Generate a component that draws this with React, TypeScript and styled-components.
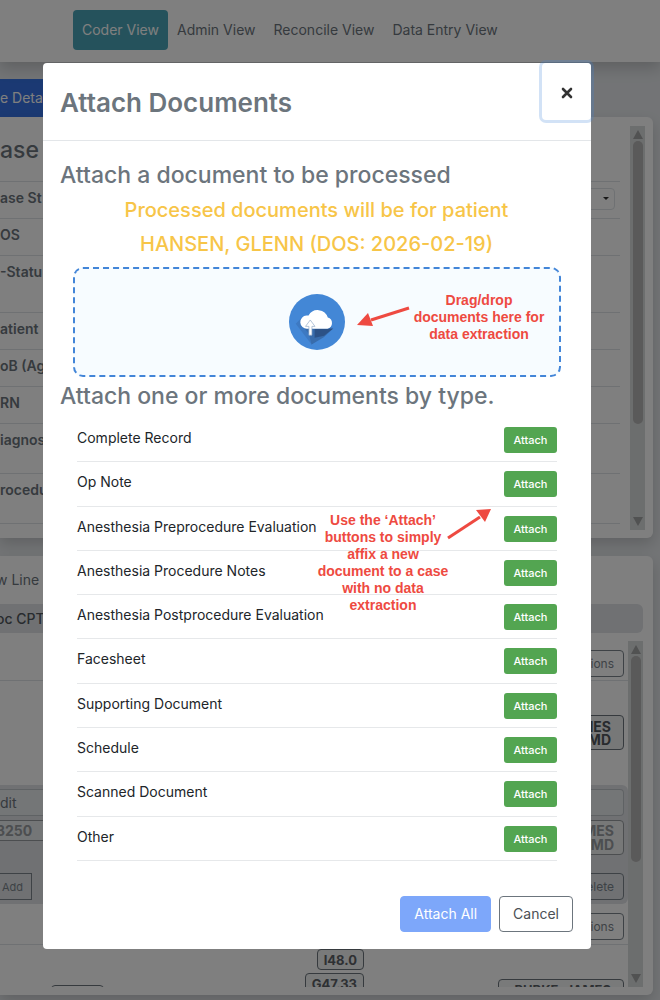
import React from 'react';
import styled, { createGlobalStyle, css } from 'styled-components';

const GlobalStyle = createGlobalStyle`
  *, *::before, *::after { box-sizing: border-box; }
  body {
    margin: 0;
    background: #e6e9ec;
    font-family: Inter, "Liberation Sans", sans-serif;
    font-size: 14px;
    line-height: 20px;
    color: #212529;
  }
  button, select, input { font: inherit; }
  h1, h2, h3, p, ul, dl, dd { margin: 0; padding: 0; }
`;

const Page = styled.div`
  position: relative;
  height: 100vh;
  overflow: hidden;
`;

/* ---------- page behind the dialog ---------- */

const NavBar = styled.nav`
  position: relative;
  display: flex;
  align-items: center;
  height: 62px;
  padding: 0 73px 2px;
  background: #fff;
  box-shadow: 0 6px 14px rgba(0, 0, 0, 0.18);
`;

const NavLink = styled.a<{ $active?: boolean }>`
  padding: 10px 9px;
  border-radius: 4px;
  white-space: nowrap;
  color: #6c757d;
  text-decoration: none;
  ${(p) =>
    p.$active &&
    css`
      background: #4aa5b8;
      color: #fff;
    `}
`;

const Main = styled.main`
  padding: 17px 7px 0 0;
`;

const TabButton = styled.button`
  display: block;
  width: 160px;
  height: 38px;
  padding: 0;
  border: 0;
  background: #3673e6;
  color: #fff;
  text-align: left;
`;

const Card = styled.section`
  border-radius: 0 6px 6px 0;
  background: #fff;
  box-shadow: 0 6px 14px rgba(0, 0, 0, 0.16);
`;

const DetailCard = styled(Card)`
  display: flex;
  gap: 10px;
  height: 421px;
  margin-bottom: 18px;
  padding: 9px 8px 8px 0;
`;

const DetailBody = styled.div`
  flex: 1;
`;

const DetailTitle = styled.h2`
  height: 55px;
  padding-top: 9px;
  font-size: 23px;
  line-height: 30px;
  font-weight: 500;
  color: #6c757d;
`;

const DetailRow = styled.div<{ $size?: 'tall' | 'medium' }>`
  display: flex;
  justify-content: space-between;
  height: ${(p) => (p.$size === 'tall' ? 57 : p.$size === 'medium' ? 50 : 37)}px;
  padding: 6px 5px 0 0;
  border-top: 1px solid #dee2e6;
  font-weight: 600;
  color: #6c757d;
`;

const StatusSelect = styled.select`
  appearance: none;
  width: 120px;
  height: 22px;
  border: 1px solid #dee2e6;
  border-radius: 4px;
  background: #fff;
`;

const SelectWrap = styled.span`
  position: relative;
  &::after {
    content: '';
    position: absolute;
    top: 9px;
    right: 6px;
    border: 3px solid transparent;
    border-top-color: #333;
  }
`;

const ScrollTrack = styled.div`
  display: flex;
  flex: none;
  flex-direction: column;
  align-items: center;
  width: 15px;
  padding: 4px 0;
  background: #d9dcdc;
`;

const ScrollArrow = styled.span<{ $down?: boolean }>`
  width: 0;
  height: 0;
  border: 5px solid transparent;
  ${(p) =>
    p.$down
      ? css`border-top: 9px solid #a2a4a5; border-bottom: 0; margin-top: auto;`
      : css`border-bottom: 9px solid #a2a4a5; border-top: 0;`}
`;

const ScrollThumb = styled.span<{ $length: number }>`
  width: 10px;
  height: ${(p) => p.$length}px;
  margin-top: 2px;
  border-radius: 5px;
  background: #b4b4b4;
`;

const LineCard = styled(Card)`
  height: 439px;
  padding: 0 10px 8px 0;
`;

const LineTitle = styled.h2`
  height: 48px;
  padding-top: 14px;
  font-size: 14px;
  line-height: 20px;
  font-weight: 400;
  text-indent: -4px;
  color: #6c757d;
`;

const ColumnHead = styled.div`
  height: 29px;
  margin-bottom: 8px;
  border-radius: 0 6px 6px 0;
  background: #e0e3e7;
  line-height: 29px;
  font-weight: 500;
  text-indent: -4px;
  color: #50565c;
`;

const LineScroller = styled.div`
  display: flex;
  height: 346px;
  overflow: hidden;
`;

const Lines = styled.div`
  flex: 1;
`;

const LineRow = styled.div<{ $height: number; $rule?: boolean }>`
  display: flex;
  justify-content: flex-end;
  align-items: flex-start;
  height: ${(p) => p.$height}px;
  padding: 9px 4px 0 0;
  border-bottom: ${(p) => (p.$rule ? '1px solid #dee2e6' : '0')};
`;

const SmallButton = styled.button`
  height: 27px;
  padding: 0 9px;
  border: 1px solid #7c858d;
  border-radius: 4px;
  background: transparent;
  font-size: 12px;
  color: #7c858d;
`;

const AddButton = styled(SmallButton)`
  padding: 0 8px 0 2px;
  border-left: 0;
  border-radius: 0;
  font-size: 11px;
`;

const Provider = styled.div<{ $faded?: boolean }>`
  width: 126px;
  height: 35px;
  padding: 4px 12px;
  border: 1px solid #6c757d;
  border-radius: 4px;
  font-size: 14px;
  line-height: 13px;
  font-weight: 700;
  text-align: right;
  color: #50565c;
  background: #eef0f0;
  ${(p) =>
    p.$faded &&
    css`
      padding: 3px 9px;
      line-height: 14px;
      color: #989ca0;
      border-color: #989ca0;
    `}
`;

const EditBlock = styled.div`
  height: 119px;
  padding: 4px 4px 0 0;
  border-radius: 0 6px 6px 0;
  background: #e0e3e7;
`;

const EditField = styled.div`
  height: 27px;
  margin-bottom: 4px;
  border: 1px solid #bfc4c9;
  border-left: 0;
  border-radius: 0 4px 4px 0;
  background: #e9ecef;
  line-height: 26px;
  color: #6c757d;
`;

const Split = styled.div`
  display: flex;
  justify-content: space-between;
  align-items: flex-start;
`;

const CodeField = styled.div`
  width: 90px;
  height: 21px;
  border: 1px solid #989ca0;
  border-left: 0;
  background: #e9ecef;
  line-height: 19px;
  font-weight: 700;
  text-indent: -4px;
  color: #989ca0;
`;

const EditActions = styled(Split)`
  padding-top: 18px;
`;

const CodeRow = styled.div`
  display: grid;
  grid-template-columns: 104px 260px 1fr;
  padding: 4px 4px 0 0;
`;

const CodeChip = styled.span`
  height: 21px;
  padding: 0 6px;
  border: 1px solid #6c757d;
  border-radius: 4px;
  background: #f2f4f4;
  font-size: 13px;
  line-height: 20px;
  font-weight: 700;
  color: #5c6166;
`;

const CodeStack = styled.div`
  display: flex;
  flex-direction: column;
  align-items: flex-end;
  gap: 3px;
`;

const BlankChip = styled.span`
  justify-self: end;
  align-self: start;
  width: 53px;
  height: 20px;
  margin-top: 36px;
  border: 1px solid #6c757d;
  border-radius: 4px;
`;

const PhysicianChip = styled(CodeChip)`
  justify-self: end;
  width: 126px;
  margin-top: 30px;
  padding: 0 12px;
  text-align: right;
  white-space: nowrap;
`;

/* ---------- dialog ---------- */

const Backdrop = styled.div`
  position: absolute;
  inset: 0;
  padding: 63px 69px 0 43px;
  background: rgba(0, 0, 0, 0.5);
`;

const Dialog = styled.div`
  border-radius: 4px;
  background: #fff;
`;

const DialogHeader = styled.header`
  display: flex;
  justify-content: space-between;
  align-items: flex-start;
  height: 78px;
  padding-left: 17px;
  border-bottom: 1px solid #e3e6e9;
`;

const DialogTitle = styled.h1`
  padding-top: 22px;
  font-size: 26px;
  line-height: 36px;
  font-weight: 600;
  color: #6c757d;
`;

const CloseButton = styled.button`
  display: grid;
  place-items: center;
  width: 49px;
  height: 57px;
  padding: 2px 0 0;
  border: 0;
  border-radius: 4px;
  background: #fff;
  box-shadow: 0 0 0 3px rgba(66, 133, 216, 0.24);
  color: #333;
`;

const DialogBody = styled.div`
  padding: 18px 18px 0 17px;
`;

const SectionTitle = styled.h2`
  font-size: 23px;
  line-height: 32px;
  font-weight: 500;
  color: #6c757d;
`;

const PatientNote = styled.p`
  padding: 2px 0 6px;
  font-size: 20px;
  line-height: 34px;
  font-weight: 500;
  text-align: center;
  color: #f7c548;
`;

const DropZone = styled.label`
  position: relative;
  display: flex;
  justify-content: center;
  align-items: center;
  height: 110px;
  margin: 0 12px 3px 13px;
  border: 2px dashed #4285d8;
  border-radius: 10px;
  background: #f7fcff;
`;

const FileInput = styled.input`
  position: absolute;
  width: 1px;
  height: 1px;
  opacity: 0;
`;

const Callout = styled.span<{ $top: number; $right: number }>`
  position: absolute;
  top: ${(p) => p.$top}px;
  right: ${(p) => p.$right}px;
  width: 136px;
  font-family: "Liberation Sans", Arial, sans-serif;
  font-size: 14px;
  line-height: 17px;
  font-weight: 700;
  text-align: center;
  color: #ee4a41;
`;

const CalloutArrow = styled.svg<{ $top: number; $right: number }>`
  position: absolute;
  top: ${(p) => p.$top}px;
  right: ${(p) => p.$right}px;
  fill: #ee4a41;
  stroke: #ee4a41;
`;

const DocumentPicker = styled.div`
  position: relative;
  margin: 6px 16px 0 17px;
`;

const DocumentList = styled.ul`
  display: grid;
  grid-auto-rows: 1fr;
  min-height: 443px;
  list-style: none;
`;

const DocumentRow = styled.li`
  display: flex;
  justify-content: space-between;
  align-items: flex-start;
  padding-top: 9px;
  border-bottom: 1px solid #e6e8ea;
`;

const DocumentName = styled.span`
  padding-top: 1px;
`;

const AttachButton = styled.button`
  width: 53px;
  height: 26px;
  padding: 0;
  border: 0;
  border-radius: 3px;
  background: #53a551;
  font-size: 11px;
  font-weight: 500;
  color: #fff;
`;

const DialogFooter = styled.footer`
  display: flex;
  justify-content: flex-end;
  gap: 8px;
  padding: 35px 18px 17px;
`;

const FooterButton = styled.button<{ $primary?: boolean }>`
  height: 36px;
  padding: 0 13px;
  border: 1px solid ${(p) => (p.$primary ? '#7da7fa' : '#6c757d')};
  border-radius: 4px;
  background: ${(p) => (p.$primary ? '#7da7fa' : '#fff')};
  color: ${(p) => (p.$primary ? '#fff' : '#4b5055')};
`;

const documents = [
  'Complete Record',
  'Op Note',
  'Anesthesia Preprocedure Evaluation',
  'Anesthesia Procedure Notes',
  'Anesthesia Postprocedure Evaluation',
  'Facesheet',
  'Supporting Document',
  'Schedule',
  'Scanned Document',
  'Other',
];

const detailRows: { label: string; size?: 'tall' | 'medium' }[] = [
  { label: 'OS' },
  { label: '-Statu', size: 'tall' },
  { label: 'atient' },
  { label: 'oB (Ag' },
  { label: 'RN' },
  { label: 'iagnos', size: 'medium' },
  { label: 'rocedu', size: 'medium' },
  { label: '' },
];

function ScrollBar({ length }: { length: number }) {
  return (
    <ScrollTrack aria-hidden="true">
      <ScrollArrow />
      <ScrollThumb $length={length} />
      <ScrollArrow $down />
    </ScrollTrack>
  );
}

function CloudUploadIcon() {
  return (
    <svg width="56" height="56" viewBox="0 0 166 166" aria-hidden="true">
      <circle cx="83" cy="83" r="83" fill="#4387d6" />
      <path d="M36 72 20 88l47 62 64-49z" fill="#3d79c2" />
      <path d="M46 102h85l-28 26-36 22-8-32z" fill="#386cac" />
      <path d="M76 103h54l-26 21-28 6z" fill="#2c5287" />
      <path
        d="M54 103a19 19 0 0 1-2-39q3-1 6 0a31 31 0 0 1 57 6 17 17 0 0 1-1 33z"
        fill="#fff"
      />
      <path
        d="M63 77 77 96h-9v26h-9V96h-10z"
        fill="#fff"
        stroke="#8fa9c6"
        strokeWidth="2"
      />
    </svg>
  );
}

export default function App() {
  return (
    <>
      <GlobalStyle />
      <Page>
        <NavBar>
          <NavLink href="#coder" $active>Coder View</NavLink>
          <NavLink href="#admin">Admin View</NavLink>
          <NavLink href="#reconcile">Reconcile View</NavLink>
          <NavLink href="#entry">Data Entry View</NavLink>
        </NavBar>
        <Main>
          <TabButton type="button">e Deta</TabButton>
          <DetailCard>
            <DetailBody>
              <DetailTitle>ase</DetailTitle>
              <DetailRow>
                <label htmlFor="status">ase St</label>
                <SelectWrap>
                  <StatusSelect id="status" />
                </SelectWrap>
              </DetailRow>
              {detailRows.map((row, i) => (
                <DetailRow key={i} $size={row.size}>{row.label}</DetailRow>
              ))}
            </DetailBody>
            <ScrollBar length={283} />
          </DetailCard>
          <LineCard>
            <LineTitle>w Line</LineTitle>
            <ColumnHead>oc CPT</ColumnHead>
            <LineScroller>
              <Lines>
                <LineRow $height={40} $rule>
                  <SmallButton type="button">tions</SmallButton>
                </LineRow>
                <LineRow $height={25} />
                <LineRow $height={79}>
                  <Provider>IES<br />MD</Provider>
                </LineRow>
                <EditBlock>
                  <EditField>dit</EditField>
                  <Split>
                    <CodeField>3250</CodeField>
                    <Provider $faded>MES<br />MD</Provider>
                  </Split>
                  <EditActions>
                    <AddButton type="button">Add</AddButton>
                    <SmallButton type="button">elete</SmallButton>
                  </EditActions>
                </EditBlock>
                <LineRow $height={41} $rule>
                  <SmallButton type="button">tions</SmallButton>
                </LineRow>
                <CodeRow>
                  <BlankChip />
                  <CodeStack>
                    <CodeChip>I48.0</CodeChip>
                    <CodeChip>G47.33</CodeChip>
                  </CodeStack>
                  <PhysicianChip>BURKE, JAMES</PhysicianChip>
                </CodeRow>
              </Lines>
              <ScrollBar length={206} />
            </LineScroller>
          </LineCard>
        </Main>

        <Backdrop>
          <Dialog role="dialog" aria-modal="true" aria-labelledby="dialog-title">
            <DialogHeader>
              <DialogTitle id="dialog-title">Attach Documents</DialogTitle>
              <CloseButton type="button" aria-label="Close">
                <svg width="12" height="12" viewBox="0 0 12 12" aria-hidden="true">
                  <path d="M2 2l8 8M10 2l-8 8" stroke="currentColor" strokeWidth="2.6" strokeLinecap="round" />
                </svg>
              </CloseButton>
            </DialogHeader>
            <DialogBody>
              <SectionTitle>Attach a document to be processed</SectionTitle>
              <PatientNote>
                Processed documents will be for patient
                <br />
                HANSEN, GLENN (DOS: 2026-02-19)
              </PatientNote>
              <DropZone>
                <FileInput type="file" multiple aria-label="Documents to process" />
                <CloudUploadIcon />
                <CalloutArrow $top={35} $right={148} width="56" height="24" viewBox="0 0 56 24" aria-hidden="true">
                  <path d="M54 4 16 16" strokeWidth="3" />
                  <path d="M2 21 13 9l5 13z" stroke="none" />
                </CalloutArrow>
                <Callout $top={23} $right={12}>
                  Drag/drop<br />documents here for<br />data extraction
                </Callout>
              </DropZone>
              <SectionTitle>Attach one or more documents by type.</SectionTitle>
              <DocumentPicker>
                <DocumentList>
                  {documents.map((name) => (
                    <DocumentRow key={name}>
                      <DocumentName>{name}</DocumentName>
                      <AttachButton type="button">Attach</AttachButton>
                    </DocumentRow>
                  ))}
                </DocumentList>
                <Callout $top={94} $right={106}>
                  Use the ‘Attach’<br />buttons to simply<br />affix a new<br />
                  document to a case<br />with no data<br />extraction
                </Callout>
                <CalloutArrow $top={89} $right={64} width="47" height="33" viewBox="0 0 47 33" aria-hidden="true">
                  <path d="M2 31 34 10" strokeWidth="3" />
                  <path d="M45 2 30 3l9 12z" stroke="none" />
                </CalloutArrow>
              </DocumentPicker>
            </DialogBody>
            <DialogFooter>
              <FooterButton type="button" $primary>Attach All</FooterButton>
              <FooterButton type="button">Cancel</FooterButton>
            </DialogFooter>
          </Dialog>
        </Backdrop>
      </Page>
    </>
  );
}
